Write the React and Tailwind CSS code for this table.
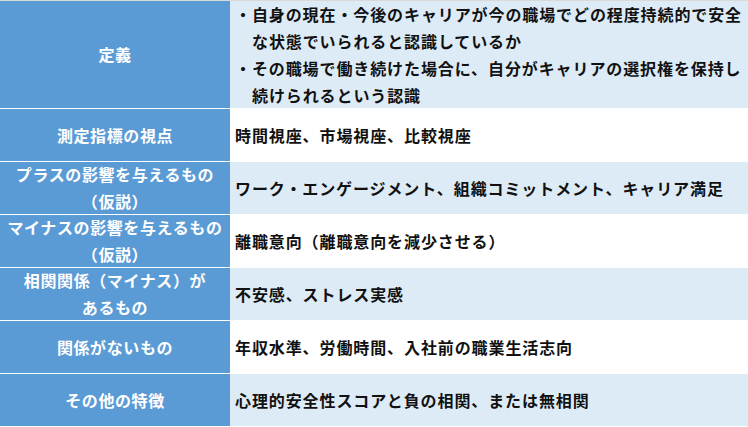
const rows = [
  { label: ['定義'], body: null, h: 'h-[107px]', light: true },
  { label: ['測定指標の視点'], body: '時間視座、市場視座、比較視座', light: false },
  { label: ['プラスの影響を与えるもの', '（仮説）'], body: 'ワーク・エンゲージメント、組織コミットメント、キャリア満足', light: true },
  { label: ['マイナスの影響を与えるもの', '（仮説）'], body: '離職意向（離職意向を減少させる）', light: false },
  { label: ['相関関係（マイナス）が', 'あるもの'], body: '不安感、ストレス実感', light: true },
  { label: ['関係がないもの'], body: '年収水準、労働時間、入社前の職業生活志向', light: false },
  { label: ['その他の特徴'], body: '心理的安全性スコアと負の相関、または無相関', light: true },
];

export default function App() {
  return (
    <div
      className="w-[748px] h-[427px] overflow-hidden bg-white border-t border-[#d9d9d9] text-[16px] font-bold leading-[27px]"
      style={{ fontFamily: '"Noto Sans CJK JP", "Noto Sans", sans-serif' }}
    >
      {rows.map((r, i) => (
        <div key={i} className={`flex ${i === 0 ? 'h-[107px]' : 'h-[53px] border-t border-white'}`}>
          <div className="w-[230px] shrink-0 bg-[#5b9bd5] text-white flex flex-col items-center justify-center text-center tracking-[0.6px]">
            {r.label.map((l, j) => (
              <div key={j}>{l}</div>
            ))}
          </div>
          <div
            className={`flex-1 flex flex-col justify-center pl-[5px] text-[#111] tracking-[0.9px] ${
              r.light ? 'bg-[#ddebf7]' : 'bg-white'
            }`}
          >
            {r.body ? (
              <div>{r.body}</div>
            ) : (
              <>
                <div className="pl-[17px] -indent-[17px]">・自身の現在・今後のキャリアが今の職場でどの程度持続的で安全な状態でいられると認識しているか</div>
                <div className="pl-[17px] -indent-[17px]">・その職場で働き続けた場合に、自分がキャリアの選択権を保持し続けられるという認識</div>
              </>
            )}
          </div>
        </div>
      ))}
    </div>
  );
}
